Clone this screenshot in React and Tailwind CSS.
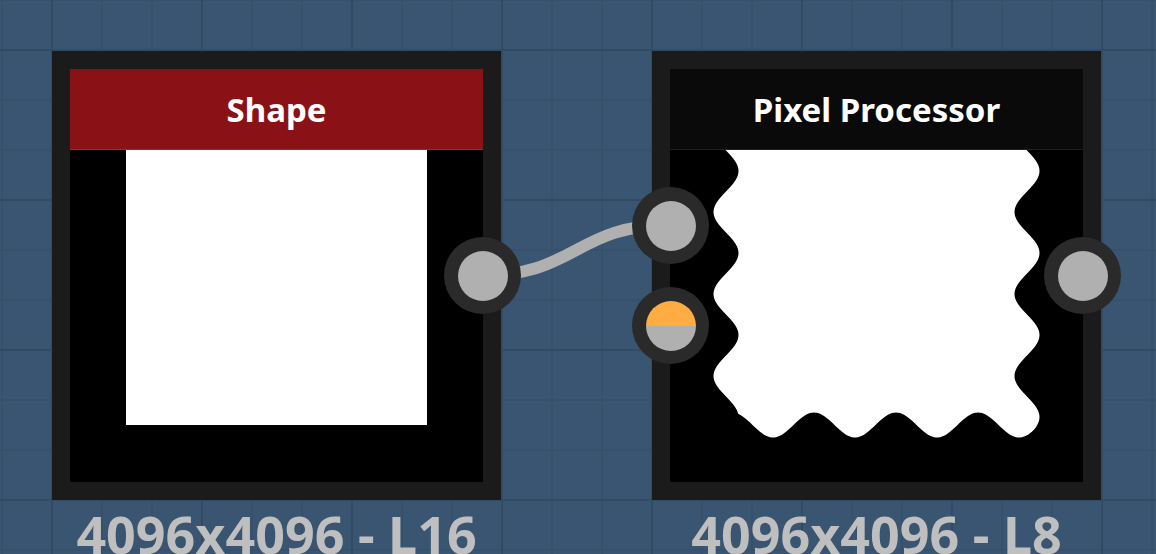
import React from 'react';

const waveX = (y) => 12.5 * Math.cos((2 * Math.PI * (y - 102)) / 82);
const waveY = (x) => 12.5 * Math.cos((2 * Math.PI * (x - 103)) / 82);

const buildBands = () => {
  const left = [];
  const right = [];
  const top = [];
  const bottom = [];
  for (let t = -10; t <= 423; t += 2) {
    left.push(`${(56 + waveX(t)).toFixed(2)},${t}`);
    right.unshift(`${(357 + waveX(t)).toFixed(2)},${t}`);
    top.push(`${t},${(56 + waveY(t)).toFixed(2)}`);
    bottom.unshift(`${t},${(356 + waveY(t)).toFixed(2)}`);
  }
  return {
    vertical: `M${left.join(' L')} L${right.join(' L')} Z`,
    horizontal: `M${top.join(' L')} L${bottom.join(' L')} Z`,
  };
};

const bands = buildBands();

const Port = ({ className, half }) => (
  <div className={`absolute w-[77px] h-[77px] rounded-full bg-[#2a2a2a] flex items-center justify-center ${className}`}>
    <div
      className={`w-[50px] h-[50px] rounded-full ${
        half ? 'bg-[linear-gradient(to_bottom,#ffad42_50%,#b0b0b0_50%)]' : 'bg-[#b0b0b0]'
      }`}
    />
  </div>
);

const Node = ({ className, title, headerClass, label, children, ports }) => (
  <div className={`absolute top-[51px] flex flex-col items-center ${className}`}>
    <div className="relative w-[449px] h-[449px] bg-[#1b1b1b] p-[18px]">
      <div className="w-full h-full bg-black flex flex-col overflow-hidden">
        <div className={`h-[81px] shrink-0 flex items-center justify-center ${headerClass}`}>
          <span className="text-[33px] leading-none font-bold text-white">{title}</span>
        </div>
        <div className="flex-1 overflow-hidden">{children}</div>
      </div>
      {ports}
    </div>
    <div className="mt-[8px] text-[52px] leading-none font-bold text-[#bfbfbf] whitespace-nowrap">
      {label}
    </div>
  </div>
);

export default function App() {
  return (
    <div
      className="relative w-[1156px] h-[554px] overflow-hidden bg-[#3a5572] font-['Noto_Sans',sans-serif]
        [background-image:linear-gradient(to_right,#334a65_2px,transparent_2px),linear-gradient(to_bottom,#334a65_2px,transparent_2px),linear-gradient(to_right,#37506c_2px,transparent_2px),linear-gradient(to_bottom,#37506c_2px,transparent_2px)]
        [background-size:150px_150px,150px_150px,50px_50px,50px_50px]
        [background-position:51px_0,0_49px,1px_0,0_49px]"
    >
      {/* wire */}
      <svg className="absolute inset-0 w-full h-full" viewBox="0 0 1156 554">
        <path
          d="M482,275.5 C576,275.5 576,225 670,225"
          fill="none"
          stroke="#b0b0b0"
          strokeWidth="12"
        />
      </svg>

      <Node
        className="left-[52px]"
        title="Shape"
        headerClass="bg-[#8a1116] border-b border-[#9c2a2e]"
        label="4096x4096 - L16"
        ports={<Port className="left-[392px] top-[186px]" />}
      >
        <div className="ml-[56px] w-[301px] h-[275px] bg-white" />
      </Node>

      <Node
        className="left-[652px]"
        title="Pixel Processor"
        headerClass="bg-[#0a0a0a] border-b border-[#1e1e1e]"
        label="4096x4096 - L8"
        ports={
          <>
            <Port className="left-[-20px] top-[136px]" />
            <Port className="left-[-20px] top-[236px]" half />
            <Port className="left-[392px] top-[186px]" />
          </>
        }
      >
        <svg className="-mt-[81px] w-[413px] h-[413px]" viewBox="0 0 413 413">
          <defs>
            <clipPath id="hband">
              <path d={bands.horizontal} />
            </clipPath>
          </defs>
          <path d={bands.vertical} fill="#ffffff" clipPath="url(#hband)" />
        </svg>
      </Node>
    </div>
  );
}
